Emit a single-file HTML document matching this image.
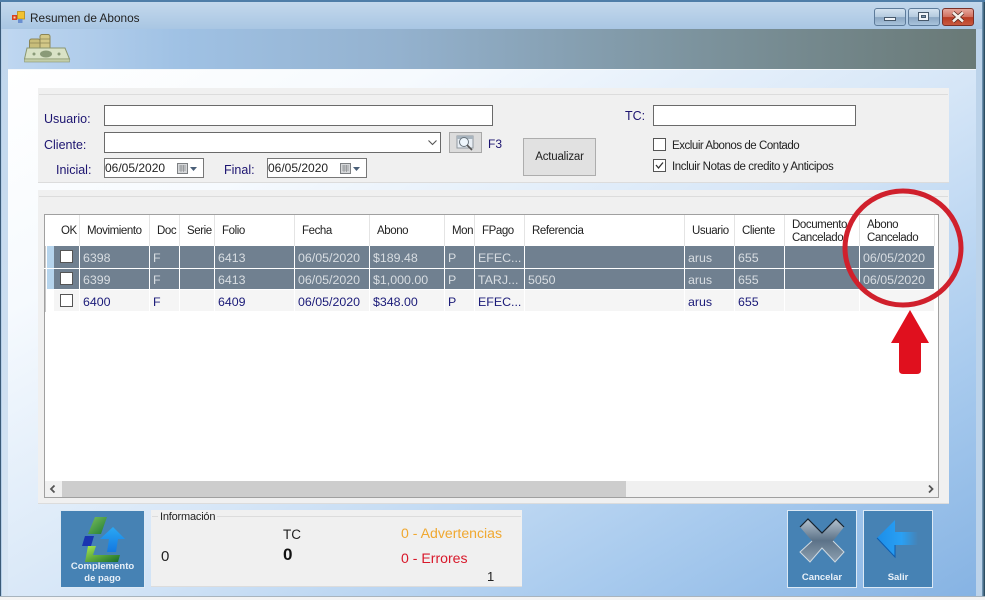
<!DOCTYPE html>
<html><head><meta charset="utf-8"><style>
html,body{margin:0;padding:0}
body{width:985px;height:600px;position:relative;overflow:hidden;background:#f4f4f4;font-family:"Liberation Sans",Arial,sans-serif;font-size:12px}
div,span{position:absolute;box-sizing:border-box;white-space:nowrap}
.l{color:#1c1470;font-size:12.5px;line-height:14px}
.inp{background:#fff;border:1px solid #6a6a6a}
.h{top:215px;height:31px;color:#222;font-size:11.5px;line-height:13px;letter-spacing:-.42px}
.c{height:21px;line-height:22px;font-size:12.4px;overflow:hidden}
.g{color:#d8dde2}.b{color:#1a1a78}
.v{width:1px;background:#fff}
.cb{width:13px;height:13px;background:#fff;border:1px solid #555}
.bt{background:#4682b4;border:1px solid #dce9f5;color:#e8f0f8;text-align:center;font-weight:bold;font-size:9.5px;line-height:12px}
</style></head><body>
<!-- window frame -->
<div style="left:0;top:0;width:985px;height:597px;background:linear-gradient(90deg,#b5cfe8 0,#c6dbf0 50%,#a9c8e8 100%)"></div>
<div style="left:0;top:0;width:985px;height:2px;background:#4f7ea8"></div>
<div style="left:0;top:2px;width:985px;height:27px;background:linear-gradient(180deg,#c4d8ec,#a9c6e3)"></div>
<div style="left:0;top:2px;width:1px;height:595px;background:#3a5a78"></div>
<div style="left:982px;top:2px;width:3px;height:595px;background:linear-gradient(90deg,#7aa0c0,#1d3d50)"></div>
<div style="left:976px;top:29px;width:6px;height:567px;background:#bcd3ea"></div>
<div style="left:2px;top:29px;width:6px;height:567px;background:linear-gradient(180deg,#c0d6ec,#d8e6f4)"></div>
<!-- title -->
<svg style="position:absolute;left:12px;top:11px" width="13" height="13"><rect x="0" y="4" width="5" height="5" fill="#d8401e"/><rect x="1.500" y="5.500" width="2" height="2" fill="#f9d0b0"/><rect x="5.500" y="0.500" width="7" height="7.500" fill="#f2c230" stroke="#b98a10" stroke-width=".8"/><rect x="6" y="8" width="4.500" height="4" fill="#6a8fd0"/></svg>
<div style="left:30px;top:11px;color:#222;font-size:11.8px;line-height:14px">Resumen de Abonos</div>
<!-- window buttons -->
<div style="left:874px;top:8px;width:32px;height:18px;border:1px solid #5d7b9a;border-radius:3px;background:linear-gradient(180deg,#d4e2f0 0,#b4cade 50%,#8aa6c2 52%,#a9c4dc 100%)"></div>
<div style="left:884px;top:17px;width:12px;height:4px;background:#f0f4f8;border:1px solid #46586a"></div>
<div style="left:908px;top:8px;width:32px;height:18px;border:1px solid #5d7b9a;border-radius:3px;background:linear-gradient(180deg,#d4e2f0 0,#b4cade 50%,#8aa6c2 52%,#a9c4dc 100%)"></div>
<div style="left:918px;top:12px;width:11px;height:9px;background:#f0f4f8;border:1px solid #46586a"></div>
<div style="left:921px;top:15px;width:5px;height:3px;background:#7d96ae;border:1px solid #46586a"></div>
<div style="left:942px;top:8px;width:32px;height:18px;border:1px solid #7a3028;border-radius:3px;background:linear-gradient(180deg,#e6a79c 0,#d0705f 50%,#b83a22 52%,#c85a40 100%)"></div>
<svg style="position:absolute;left:951px;top:11px" width="14" height="12"><path d="M2 1.500 L12 10.500 M12 1.500 L2 10.500" stroke="#4a2018" stroke-width="4"/><path d="M2 1.500 L12 10.500 M12 1.500 L2 10.500" stroke="#f4efe8" stroke-width="2.600"/></svg>
<!-- toolbar -->
<div style="left:8px;top:29px;width:968px;height:40px;background:linear-gradient(90deg,#bed6f0 0,#9fc1e4 18%,#94b2cf 40%,#7d949f 70%,#697976 100%)"></div>
<div style="left:8px;top:69px;width:968px;height:1px;background:#f4f8fb"></div>
<svg style="position:absolute;left:24px;top:34px" width="47" height="29">
<rect x="5.500" y="5" width="10.500" height="12" rx="2" fill="#c8bd7a" stroke="#8c8555"/>
<rect x="16" y="0.500" width="10" height="16" rx="2" fill="#d3c888" stroke="#8c8555"/>
<path d="M16 5h10M16 9h10M6 9h10" stroke="#8c8555" stroke-width=".8"/>
<path d="M0.500 25 L3 14 L41 14 L45.500 25 Z" fill="#d9e2c6" stroke="#8a9670"/>
<rect x="0.500" y="25" width="45" height="3" fill="#c3cea8" stroke="#8a9670" stroke-width=".6"/>
<ellipse cx="22" cy="20" rx="6" ry="3.500" fill="#8a9a78"/><circle cx="10" cy="20" r="1.500" fill="#8a9a78"/><circle cx="35" cy="20" r="1.500" fill="#8a9a78"/>
</svg>
<!-- client background -->
<div style="left:8px;top:70px;width:968px;height:526px;background:linear-gradient(150deg,#ffffff 0,#f6fafe 22%,#d6e6f7 52%,#a9cbee 78%,#86b3e3 100%)"></div>
<div style="left:0;top:596px;width:985px;height:1px;background:#a8b4be"></div>
<!-- top panel -->
<div style="left:38px;top:88px;width:911px;height:95px;background:#f0f0f0;border-bottom:1px solid #dcdcdc"></div>
<div style="left:39px;top:94px;width:909px;height:1px;background:#dcdcdc"></div>
<div class="l" style="left:44px;top:112px">Usuario:</div>
<div class="inp" style="left:104px;top:105px;width:389px;height:21px"></div>
<div class="l" style="left:44px;top:138px">Cliente:</div>
<div class="inp" style="left:104px;top:132px;width:337px;height:21px"></div>
<svg style="position:absolute;left:427px;top:139px" width="12" height="8"><path d="M1.500 1.500 L5.500 5.500 L9.500 1.500" fill="none" stroke="#555" stroke-width="1.100"/></svg>
<div style="left:449px;top:132px;width:33px;height:21px;background:#dcdcdc;border:1px solid #a8a8a8"></div>
<svg style="position:absolute;left:456px;top:134px" width="20" height="17"><rect x="1" y="2" width="16" height="12" fill="#e8eef4" stroke="#8f989f"/><rect x="1" y="2" width="16" height="3" fill="#a8b4be"/><circle cx="8" cy="8" r="4.500" fill="#eef6fc" stroke="#68737c"/><path d="M11 11 L16 16" stroke="#555" stroke-width="1.600"/></svg>
<div style="left:488px;top:137px;color:#1c1470;font-size:12px;line-height:14px">F3</div>
<div class="l" style="left:56px;top:163px">Inicial:</div>
<div class="inp" style="left:104px;top:158px;width:100px;height:20px;font-size:12px;line-height:18px;color:#222;border-color:#777">06/05/2020</div>
<div class="l" style="left:224px;top:163px">Final:</div>
<div class="inp" style="left:267px;top:158px;width:100px;height:20px;font-size:12px;line-height:18px;color:#222;border-color:#777">06/05/2020</div>
<svg style="position:absolute;left:177px;top:162px" width="26" height="14"><rect x="0.500" y="1.500" width="10" height="10" fill="#d6d8da" stroke="#7d8083"/><path d="M2 4h7M2 6h7M2 8h7M4 3v7M6.500 3v7" stroke="#8a8d90" stroke-width=".7"/><path d="M13 5h7l-3.500 4z" fill="#4a5f78"/></svg>
<svg style="position:absolute;left:340px;top:162px" width="26" height="14"><rect x="0.500" y="1.500" width="10" height="10" fill="#d6d8da" stroke="#7d8083"/><path d="M2 4h7M2 6h7M2 8h7M4 3v7M6.500 3v7" stroke="#8a8d90" stroke-width=".7"/><path d="M13 5h7l-3.500 4z" fill="#4a5f78"/></svg>
<div style="left:523px;top:138px;width:73px;height:38px;background:#e1e1e1;border:1px solid #adadad;text-align:center;line-height:37px;color:#222;font-size:11.5px;letter-spacing:-.2px">Actualizar</div>
<div class="l" style="left:625px;top:109px">TC:</div>
<div class="inp" style="left:653px;top:105px;width:203px;height:21px"></div>
<div class="cb" style="left:653px;top:138px"></div>
<div style="left:672px;top:139px;color:#222;font-size:11.5px;line-height:14px;letter-spacing:-.46px">Excluir Abonos de Contado</div>
<div class="cb" style="left:653px;top:159px"></div>
<svg style="position:absolute;left:654px;top:160px" width="11" height="11"><path d="M2 5 L4.500 8 L9 2.500" fill="none" stroke="#333" stroke-width="1.300"/></svg>
<div style="left:672px;top:160px;color:#222;font-size:11.5px;line-height:14px;letter-spacing:-.4px">Incluir Notas de credito y Anticipos</div>
<!-- grid panel -->
<div style="left:38px;top:190px;width:911px;height:314px;background:#f0f0f0;border-bottom:1px solid #dcdcdc"></div>
<div style="left:39px;top:196px;width:909px;height:1px;background:#dcdcdc"></div>
<div style="left:44px;top:214px;width:895px;height:284px;background:#fff;border:1px solid #a0a0a0"></div>
<!-- header -->
<div class="h" style="left:61px;line-height:32px">OK</div>
<div class="h" style="left:87px;line-height:32px">Movimiento</div>
<div class="h" style="left:157px;line-height:32px">Doc</div>
<div class="h" style="left:187px;line-height:32px">Serie</div>
<div class="h" style="left:222px;line-height:32px">Folio</div>
<div class="h" style="left:302px;line-height:32px">Fecha</div>
<div class="h" style="left:377px;line-height:32px">Abono</div>
<div class="h" style="left:452px;line-height:32px">Mon</div>
<div class="h" style="left:482px;line-height:32px">FPago</div>
<div class="h" style="left:532px;line-height:32px">Referencia</div>
<div class="h" style="left:692px;line-height:32px">Usuario</div>
<div class="h" style="left:742px;line-height:32px">Cliente</div>
<div class="h" style="left:792px;top:219px">Documento<br>Cancelado</div>
<div class="h" style="left:867px;top:219px">Abono<br>Cancelado</div>
<!-- header separators -->
<div style="left:79px;top:215px;width:1px;height:31px;background:#e4e4e4"></div>
<div style="left:149px;top:215px;width:1px;height:31px;background:#e4e4e4"></div>
<div style="left:179px;top:215px;width:1px;height:31px;background:#e4e4e4"></div>
<div style="left:214px;top:215px;width:1px;height:31px;background:#e4e4e4"></div>
<div style="left:294px;top:215px;width:1px;height:31px;background:#e4e4e4"></div>
<div style="left:369px;top:215px;width:1px;height:31px;background:#e4e4e4"></div>
<div style="left:444px;top:215px;width:1px;height:31px;background:#e4e4e4"></div>
<div style="left:474px;top:215px;width:1px;height:31px;background:#e4e4e4"></div>
<div style="left:524px;top:215px;width:1px;height:31px;background:#e4e4e4"></div>
<div style="left:684px;top:215px;width:1px;height:31px;background:#e4e4e4"></div>
<div style="left:734px;top:215px;width:1px;height:31px;background:#e4e4e4"></div>
<div style="left:784px;top:215px;width:1px;height:31px;background:#e4e4e4"></div>
<div style="left:859px;top:215px;width:1px;height:31px;background:#e4e4e4"></div>
<div style="left:934px;top:215px;width:1px;height:31px;background:#e4e4e4"></div>
<!-- rows -->
<div style="left:47px;top:246px;width:7px;height:43px;background:#b6d4ec"></div>
<div style="left:45px;top:246px;width:1px;height:66px;background:#c8c8c8"></div>
<div style="left:54px;top:246px;width:881px;height:22px;background:#708090"></div>
<div style="left:54px;top:269px;width:881px;height:21px;background:#708090"></div>
<div style="left:54px;top:290px;width:881px;height:21px;background:#f5f5f5"></div>
<div style="left:44px;top:268px;width:891px;height:1px;background:#fff"></div>
<div style="left:54px;top:289px;width:881px;height:1px;background:#fff"></div>
<div class="v" style="left:79px;top:246px;height:65px"></div>
<div class="v" style="left:149px;top:246px;height:65px"></div>
<div class="v" style="left:179px;top:246px;height:65px"></div>
<div class="v" style="left:214px;top:246px;height:65px"></div>
<div class="v" style="left:294px;top:246px;height:65px"></div>
<div class="v" style="left:369px;top:246px;height:65px"></div>
<div class="v" style="left:444px;top:246px;height:65px"></div>
<div class="v" style="left:474px;top:246px;height:65px"></div>
<div class="v" style="left:524px;top:246px;height:65px"></div>
<div class="v" style="left:684px;top:246px;height:65px"></div>
<div class="v" style="left:734px;top:246px;height:65px"></div>
<div class="v" style="left:784px;top:246px;height:65px"></div>
<div class="v" style="left:859px;top:246px;height:65px"></div>
<div class="v" style="left:934px;top:246px;height:65px"></div>
<div class="cb" style="left:60px;top:250px"></div>
<div class="cb" style="left:60px;top:272px"></div>
<div class="cb" style="left:60px;top:294px"></div>
<!-- row1 -->
<div class="c g" style="left:83px;top:247px">6398</div><div class="c g" style="left:153px;top:247px">F</div><div class="c g" style="left:218px;top:247px">6413</div><div class="c g" style="left:298px;top:247px">06/05/2020</div><div class="c g" style="left:373px;top:247px">$189.48</div><div class="c g" style="left:448px;top:247px">P</div><div class="c g" style="left:478px;top:247px">EFEC...</div><div class="c g" style="left:688px;top:247px">arus</div><div class="c g" style="left:738px;top:247px">655</div><div class="c g" style="left:863px;top:247px">06/05/2020</div>
<!-- row2 -->
<div class="c g" style="left:83px;top:269px">6399</div><div class="c g" style="left:153px;top:269px">F</div><div class="c g" style="left:218px;top:269px">6413</div><div class="c g" style="left:298px;top:269px">06/05/2020</div><div class="c g" style="left:373px;top:269px">$1,000.00</div><div class="c g" style="left:448px;top:269px">P</div><div class="c g" style="left:478px;top:269px">TARJ...</div><div class="c g" style="left:528px;top:269px">5050</div><div class="c g" style="left:688px;top:269px">arus</div><div class="c g" style="left:738px;top:269px">655</div><div class="c g" style="left:863px;top:269px">06/05/2020</div>
<!-- row3 -->
<div class="c b" style="left:83px;top:291px">6400</div><div class="c b" style="left:153px;top:291px">F</div><div class="c b" style="left:218px;top:291px">6409</div><div class="c b" style="left:298px;top:291px">06/05/2020</div><div class="c b" style="left:373px;top:291px">$348.00</div><div class="c b" style="left:448px;top:291px">P</div><div class="c b" style="left:478px;top:291px">EFEC...</div><div class="c b" style="left:688px;top:291px">arus</div><div class="c b" style="left:738px;top:291px">655</div>
<!-- scrollbar -->
<div style="left:45px;top:481px;width:893px;height:16px;background:#f0f0f0"></div>
<div style="left:62px;top:481px;width:564px;height:16px;background:#cdcdcd"></div>
<svg style="position:absolute;left:47px;top:483px" width="12" height="12"><path d="M7.500 2.500 L4 6 L7.500 9.500" fill="none" stroke="#555" stroke-width="1.800"/></svg>
<svg style="position:absolute;left:925px;top:483px" width="12" height="12"><path d="M4 2.500 L7.500 6 L4 9.500" fill="none" stroke="#555" stroke-width="1.800"/></svg>
<!-- annotation -->
<svg style="position:absolute;left:835px;top:180px" width="140" height="200">
<ellipse cx="68" cy="68" rx="58" ry="57" fill="none" stroke="#d0202c" stroke-width="5"/>
<path d="M75 130 L94 163 L86 163 L86 190 Q86 194 82 194 L68 194 Q64 194 64 190 L64 163 L56 163 Z" fill="#e0101e"/>
</svg>
<!-- complemento -->
<div class="bt" style="left:60px;top:510px;width:85px;height:78px"><span style="left:0;right:0;top:50px;text-align:center">Complemento<br>de pago</span></div>
<svg style="position:absolute;left:80px;top:515px" width="46" height="48">
<defs><linearGradient id="gr" x1="0" y1="0" x2="1" y2="1"><stop offset="0" stop-color="#a8e850"/><stop offset="1" stop-color="#136a28"/></linearGradient><linearGradient id="g2" x1="0" y1="0" x2="1" y2="1"><stop offset="0" stop-color="#7cc060"/><stop offset="1" stop-color="#1f7a30"/></linearGradient><linearGradient id="bl" x1="0" y1="0" x2="0" y2="1"><stop offset="0" stop-color="#2aa8f4"/><stop offset="1" stop-color="#1478e0"/></linearGradient></defs>
<path d="M15 2 L27 2 L21 19 L8 19 Z" fill="url(#g2)"/>
<path d="M5 21 L14 21 L11 31 L2 31 Z" fill="#1a34b0"/>
<path d="M8 31 L16 31 L13 40 L40 40 L38 47 L5 47 Z" fill="url(#gr)"/>
<path d="M33 12 L45 24 L38 24 L36 37 L27 37 L29 24 L20 24 Z" fill="url(#bl)"/>
</svg>
<!-- info -->
<div style="left:151px;top:510px;width:371px;height:77px;background:#f0f0f0;border-bottom:1px solid #dcdcdc"></div>
<div style="left:152px;top:516px;width:369px;height:1px;background:#dcdcdc"></div>
<div style="left:158px;top:511px;padding:0 2px;background:#f0f0f0;color:#222;font-size:11px;line-height:13px;letter-spacing:-.2px">Información</div>
<div style="left:161px;top:548px;font-size:15px;line-height:18px;color:#222">0</div>
<div style="left:283px;top:527px;font-size:13.500px;line-height:16px;color:#222">TC</div>
<div style="left:283px;top:545px;font-size:17px;line-height:20px;font-weight:bold;color:#111">0</div>
<div style="left:401px;top:525px;font-size:14.100px;line-height:16px;color:#f0a830">0 - Advertencias</div>
<div style="left:401px;top:550px;font-size:14.100px;line-height:16px;color:#d8182a">0 - Errores</div>
<div style="left:487px;top:569px;font-size:13px;line-height:16px;color:#222">1</div>
<!-- cancelar -->
<div class="bt" style="left:787px;top:510px;width:70px;height:78px"><span style="left:0;right:0;top:61px;text-align:center">Cancelar</span></div>
<svg style="position:absolute;left:799px;top:518px" width="46" height="46">
<defs><linearGradient id="sx" x1="0" y1="0" x2="0" y2="1"><stop offset="0" stop-color="#b4c2ce"/><stop offset=".5" stop-color="#5c7288"/><stop offset="1" stop-color="#8da0b0"/></linearGradient></defs>
<path d="M9 1 L23 15 L37 1 L45 9 L34 23 L45 34 L36 44 L23 30 L11 44 L1 34 L13 23 L1 9 Z" fill="url(#sx)"/>
<path d="M1 9 L9 1 L23 15 L37 1 L45 9" fill="none" stroke="#16222e" stroke-width="1.200"/>
<path d="M13 23 L1 34 L11 44 L23 30 L36 44 L45 34 L34 23" fill="none" stroke="#cfd9e0" stroke-width="1"/>
</svg>
<!-- salir -->
<div class="bt" style="left:863px;top:510px;width:70px;height:78px"><span style="left:0;right:0;top:61px;text-align:center">Salir</span></div>
<svg style="position:absolute;left:876px;top:518px" width="44" height="42">
<defs><linearGradient id="ar" x1="0" y1="0" x2="1" y2="0"><stop offset="0" stop-color="#1c8ee8"/><stop offset=".6" stop-color="#2aa0f4"/><stop offset="1" stop-color="#4682b4"/></linearGradient></defs>
<path d="M1 20 L19 2 L19 14 L42 14 L42 27 L19 27 L19 39 Z" fill="url(#ar)"/>
<path d="M1 20 L19 39 L19 27" fill="none" stroke="#0c5cb0" stroke-width="1"/>
</svg>
</body></html>
